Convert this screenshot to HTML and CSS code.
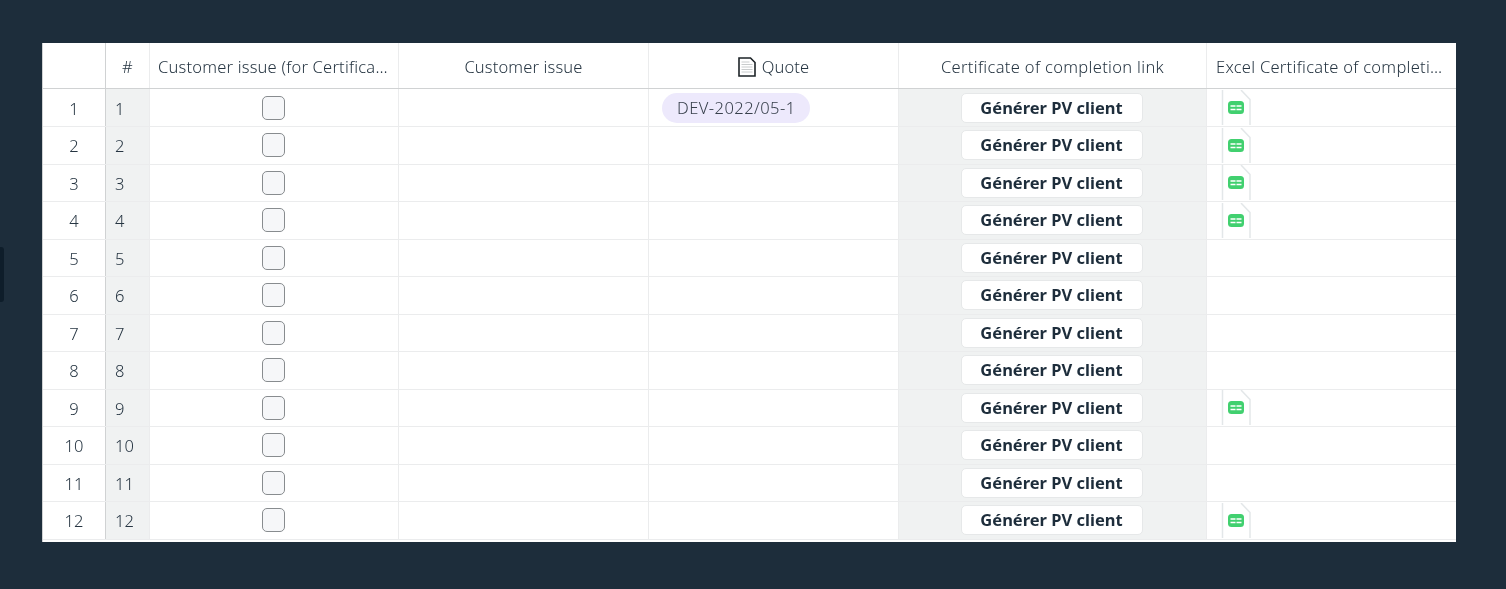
FILE: index.html
```html
<!DOCTYPE html>
<html lang="en">
<head>
<meta charset="utf-8">
<title>Customer issues</title>
<link rel="stylesheet" href="styles.css">
</head>
<body>
<div class="edge-tab"></div>
<main class="table">
  <svg width="0" height="0" class="defs">
    <symbol id="xl" viewBox="0 0 30 35">
      <path d="M1.500 0V35M20 0l9 9.500V35" fill="none" stroke="#e3e7e9" stroke-width="1.500"/>
      <rect x="7" y="11" width="16" height="13" rx="3.500" fill="#41d06f"/>
      <path d="M9.500 16h5M15.500 16h5M9.500 19.500h5M15.500 19.500h5" stroke="#fff" stroke-width="1.500"/>
    </symbol>
  </svg>
  <div class="row head">
    <div class="c c-idx"></div>
    <div class="c c-num center">#</div>
    <div class="c c-a"><span class="clip">Customer issue (for Certificate of completion)</span></div>
    <div class="c c-b center">Customer issue</div>
    <div class="c c-q center"><svg class="doc" width="18" height="20" viewBox="0 0 18 20"><path d="M1 1h11.500L17 5.500V19H1z" fill="#fff" stroke="#1d2327" stroke-width="1.600"/><path d="M3.500 5h8M3.500 7.500h11M3.500 10h11M3.500 12.500h11M3.500 15h11" stroke="#c9cccd"/></svg>Quote</div>
    <div class="c c-l center">Certificate of completion link</div>
    <div class="c c-x"><span class="clip">Excel Certificate of completion file</span></div>
  </div>
  <div class="row"><div class="c c-idx">1</div><div class="c c-num">1</div><div class="c c-a"><span class="box"></span></div><div class="c c-b"></div><div class="c c-q"><span class="pill">DEV-2022/05-1</span></div><div class="c c-l"><span class="btn">Générer PV client</span></div><div class="c c-x"><svg class="file"><use href="#xl"/></svg></div></div>
  <div class="row"><div class="c c-idx">2</div><div class="c c-num">2</div><div class="c c-a"><span class="box"></span></div><div class="c c-b"></div><div class="c c-q"></div><div class="c c-l"><span class="btn">Générer PV client</span></div><div class="c c-x"><svg class="file"><use href="#xl"/></svg></div></div>
  <div class="row"><div class="c c-idx">3</div><div class="c c-num">3</div><div class="c c-a"><span class="box"></span></div><div class="c c-b"></div><div class="c c-q"></div><div class="c c-l"><span class="btn">Générer PV client</span></div><div class="c c-x"><svg class="file"><use href="#xl"/></svg></div></div>
  <div class="row"><div class="c c-idx">4</div><div class="c c-num">4</div><div class="c c-a"><span class="box"></span></div><div class="c c-b"></div><div class="c c-q"></div><div class="c c-l"><span class="btn">Générer PV client</span></div><div class="c c-x"><svg class="file"><use href="#xl"/></svg></div></div>
  <div class="row"><div class="c c-idx">5</div><div class="c c-num">5</div><div class="c c-a"><span class="box"></span></div><div class="c c-b"></div><div class="c c-q"></div><div class="c c-l"><span class="btn">Générer PV client</span></div><div class="c c-x"></div></div>
  <div class="row"><div class="c c-idx">6</div><div class="c c-num">6</div><div class="c c-a"><span class="box"></span></div><div class="c c-b"></div><div class="c c-q"></div><div class="c c-l"><span class="btn">Générer PV client</span></div><div class="c c-x"></div></div>
  <div class="row"><div class="c c-idx">7</div><div class="c c-num">7</div><div class="c c-a"><span class="box"></span></div><div class="c c-b"></div><div class="c c-q"></div><div class="c c-l"><span class="btn">Générer PV client</span></div><div class="c c-x"></div></div>
  <div class="row"><div class="c c-idx">8</div><div class="c c-num">8</div><div class="c c-a"><span class="box"></span></div><div class="c c-b"></div><div class="c c-q"></div><div class="c c-l"><span class="btn">Générer PV client</span></div><div class="c c-x"></div></div>
  <div class="row"><div class="c c-idx">9</div><div class="c c-num">9</div><div class="c c-a"><span class="box"></span></div><div class="c c-b"></div><div class="c c-q"></div><div class="c c-l"><span class="btn">Générer PV client</span></div><div class="c c-x"><svg class="file"><use href="#xl"/></svg></div></div>
  <div class="row"><div class="c c-idx">10</div><div class="c c-num">10</div><div class="c c-a"><span class="box"></span></div><div class="c c-b"></div><div class="c c-q"></div><div class="c c-l"><span class="btn">Générer PV client</span></div><div class="c c-x"></div></div>
  <div class="row"><div class="c c-idx">11</div><div class="c c-num">11</div><div class="c c-a"><span class="box"></span></div><div class="c c-b"></div><div class="c c-q"></div><div class="c c-l"><span class="btn">Générer PV client</span></div><div class="c c-x"></div></div>
  <div class="row"><div class="c c-idx">12</div><div class="c c-num">12</div><div class="c c-a"><span class="box"></span></div><div class="c c-b"></div><div class="c c-q"></div><div class="c c-l"><span class="btn">Générer PV client</span></div><div class="c c-x"><svg class="file"><use href="#xl"/></svg></div></div>
</main>
</body>
</html>
```
FILE: styles.css
```css
* { box-sizing: border-box; }
html, body { height: 100%; }
body {
  margin: 0;
  padding: 43px 50px 0 42px;
  background: #1d2d3b;
  overflow: hidden;
  font-family: "Noto Sans", "Open Sans", sans-serif;
  font-size: 16.500px;
  font-weight: 300;
  color: #263542;
}
.edge-tab {
  position: absolute;
  left: 0;
  top: 247px;
  width: 4px;
  height: 55px;
  background: #0e1d2a;
  border-radius: 0 3px 3px 0;
}
.defs { position: absolute; }
.table {
  width: 1414px;
  height: 499px;
  overflow: hidden;
  background: #fff;
  border-left: 1px solid #d0d2d3;
  will-change: transform;
}
.row {
  display: grid;
  grid-template-columns: 63px 44px 249px 250px 250px 308px 1fr;
  height: 37.500px;
  border-bottom: 1px solid #ebeced;
}
.row.head {
  height: 46px;
  border-bottom: 1px solid #d0d2d3;
  letter-spacing: 0.150px;
}
.head + .row { height: 38px; }
.c {
  display: flex;
  align-items: center;
  min-width: 0;
  border-right: 1px solid #ebeced;
}
.head .c { padding-top: 2px; }
.center { justify-content: center; }
.c-idx { justify-content: center; border-right: 1px solid #d0d2d3; padding-top: 1px; }
.c-num { padding: 1px 0 0 9px; background: #f0f2f2; }
.head .c-num { background: #fff; padding-left: 0; }
.c-a { justify-content: center; padding-right: 2px; }
.head .c-a { justify-content: flex-start; padding-left: 8px; padding-right: 8px; letter-spacing: 0.200px; }
.c-l { justify-content: center; background: #f0f2f2; padding-right: 2px; }
.head .c-l { background: #fff; letter-spacing: 0.330px; padding-right: 0; }
.c-x { padding-left: 14px; border-right: 0; }
.head .c-x { padding-left: 9px; padding-right: 12px; letter-spacing: 0.280px; }
.c-q { padding-left: 13px; }
.head .c-q { padding-left: 0; }
.clip { overflow: hidden; white-space: nowrap; text-overflow: ellipsis; }
.doc { margin-right: 6px; }
.box {
  width: 23px;
  height: 24px;
  border: 1px solid #888c8f;
  border-radius: 5px;
  background: #f6f7f9;
}
.pill {
  display: flex;
  align-items: center;
  height: 30px;
  padding: 0 14px 0 15px;
  border-radius: 15px;
  background: #ede9fc;
  color: #38404c;
  letter-spacing: 0.450px;
}
.btn {
  display: flex;
  align-items: center;
  justify-content: center;
  width: 182px;
  height: 30px;
  padding-bottom: 1px;
  background: #fff;
  border: 1px solid #e6e8e9;
  border-radius: 5px;
  font-weight: 700;
  color: #1d2d3b;
}
.file { width: 30px; height: 35px; }
```
